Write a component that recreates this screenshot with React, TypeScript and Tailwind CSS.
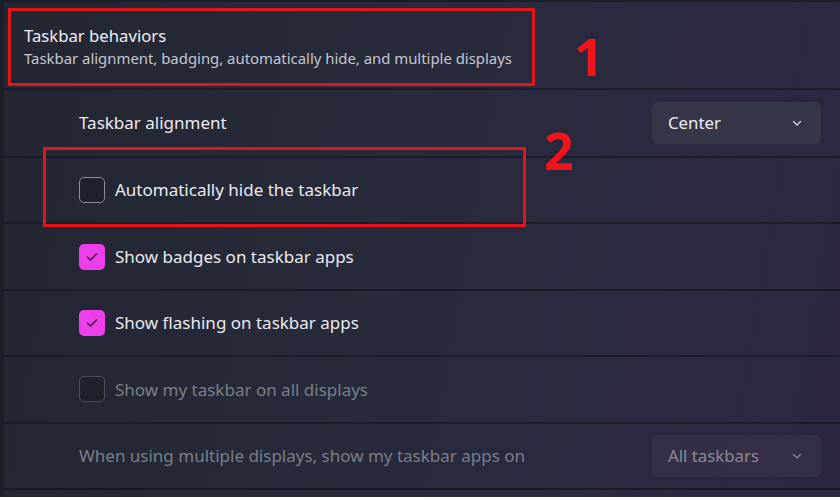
import React from 'react';

type Row = {
  label: string;
  kind: 'check' | 'select' | 'plain';
  checked?: boolean;
  disabled?: boolean;
  value?: string;
};

const rows: Row[] = [
  { label: 'Taskbar alignment', kind: 'select', value: 'Center' },
  { label: 'Automatically hide the taskbar', kind: 'check', checked: false },
  { label: 'Show badges on taskbar apps', kind: 'check', checked: true },
  { label: 'Show flashing on taskbar apps', kind: 'check', checked: true },
  { label: 'Show my taskbar on all displays', kind: 'check', checked: false, disabled: true },
  { label: 'When using multiple displays, show my taskbar apps on', kind: 'select', value: 'All taskbars', disabled: true },
];

const Chevron: React.FC<{ dim?: boolean }> = ({ dim }) => (
  <svg width="12" height="12" viewBox="0 0 12 12" fill="none" aria-hidden="true">
    <path
      d="M2.5 4.5L6 8l3.5-3.5"
      stroke={dim ? '#8a8896' : '#d8d8de'}
      strokeWidth={1.2}
      strokeLinecap="round"
      strokeLinejoin="round"
    />
  </svg>
);

const Checkbox: React.FC<{ checked?: boolean; disabled?: boolean }> = ({ checked, disabled }) => {
  if (checked) {
    return (
      <span className="w-[26px] h-[26px] rounded-[5px] bg-[#ec3ee9] flex items-center justify-center shrink-0">
        <svg width="14" height="14" viewBox="0 0 14 14" fill="none" aria-hidden="true">
          <path d="M2.5 7.2l2.9 2.9 6-6" stroke="#2a1230" strokeWidth={1.4} strokeLinecap="round" strokeLinejoin="round" />
        </svg>
      </span>
    );
  }
  return (
    <span
      className={`w-[26px] h-[26px] rounded-[5px] border-[1.5px] bg-[#1f222c] shrink-0 ${
        disabled ? 'border-[#4a4d58]' : 'border-[#8b8e97]'
      }`}
    />
  );
};

const Select: React.FC<{ value: string; disabled?: boolean }> = ({ value, disabled }) => (
  <div
    className={`w-[169px] h-[42px] rounded-[6px] flex items-center justify-between pl-[16px] pr-[18px] text-[16.8px] ${
      disabled ? 'bg-[#383248]/70 text-[#8c8898]' : 'bg-[#363649] text-[#ececf0]'
    }`}
  >
    <span>{value}</span>
    <Chevron dim={disabled} />
  </div>
);

export default function App() {
  return (
    <div
      className="relative w-[840px] h-[500px] overflow-hidden bg-[linear-gradient(100deg,#232733_0%,#262a3a_45%,#2a2940_75%,#2e2540_100%)] text-[#e8e8ec]"
      style={{ fontFamily: '"Noto Sans", "Open Sans", sans-serif' }}
    >
      <div className="flex flex-col h-full border-l-[4px] border-[#1b1e27] border-t-[2px]">
        {/* Section header */}
        <div className="h-[86px] shrink-0 flex flex-col justify-center pl-[20px] pt-[4px]">
          <div className="text-[16.7px] leading-[22px] text-[#eeeef2]">Taskbar behaviors</div>
          <div className="text-[14.9px] leading-[22px] text-[#c4c6cf]">
            Taskbar alignment, badging, automatically hide, and multiple displays
          </div>
        </div>

        {rows.map((row, i) => (
          <div
            key={row.label}
            className={`${i === 0 ? 'h-[68px]' : 'h-[66.4px]'} shrink-0 border-t-[2px] border-[#1b1e28] flex items-center justify-between pl-[75px] pr-[19px]`}
          >
            <div className="flex items-center gap-[10px]">
              {row.kind === 'check' && <Checkbox checked={row.checked} disabled={row.disabled} />}
              <span
                className={`text-[17px] ${row.disabled ? 'text-[#7b7e89]' : 'text-[#eaeaee]'}`}
              >
                {row.label}
              </span>
            </div>
            {row.kind === 'select' && row.value && <Select value={row.value} disabled={row.disabled} />}
          </div>
        ))}

        <div className="flex-1 border-t-[2px] border-[#191b24]" />
      </div>
      <div className="absolute left-0 right-0 bottom-0 h-[3px] bg-white" />

      {/* Callout markers */}
      <div className="absolute left-[8px] top-[8px] w-[527px] h-[78px] border-[3px] border-[#e3151b]" />
      <div className="absolute left-[43px] top-[147px] w-[483px] h-[80px] border-[3px] border-[#e3151b]" />
      <span
        className="absolute left-[574px] top-[22px] text-[52px] leading-[68px] font-bold text-[#f0151b]"
        style={{ fontFamily: '"Open Sans", sans-serif' }}
      >
        1
      </span>
      <span
        className="absolute left-[544px] top-[116px] text-[52px] leading-[68px] font-bold text-[#f0151b]"
        style={{ fontFamily: '"Open Sans", sans-serif' }}
      >
        2
      </span>
    </div>
  );
}
